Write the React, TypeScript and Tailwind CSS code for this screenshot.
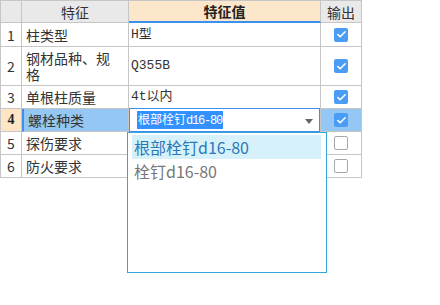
import { Check } from "lucide-react";

type Row = { no: string; name: string; value: string; checked: boolean; h: string };

const rows: Row[] = [
  { no: "1", name: "柱类型", value: "H型", checked: true, h: "h-[24px]" },
  { no: "2", name: "钢材品种、规格", value: "Q355B", checked: true, h: "h-[39px]" },
  { no: "3", name: "单根柱质量", value: "4t以内", checked: true, h: "h-[23px]" },
  { no: "4", name: "螺栓种类", value: "", checked: true, h: "h-[23px]" },
  { no: "5", name: "探伤要求", value: "", checked: false, h: "h-[23px]" },
  { no: "6", name: "防火要求", value: "", checked: false, h: "h-[23px]" },
];

const font = "font-['Noto_Sans_CJK_SC','Noto_Sans',sans-serif]";
const mono = "font-['Liberation_Mono','Noto_Sans_CJK_SC',monospace]";

function CheckBox({ on }: { on: boolean }) {
  if (on) {
    return (
      <div className="w-[14px] h-[14px] rounded-[2px] bg-[#4b9cf5] flex items-center justify-center">
        <Check size={11} strokeWidth={3.5} className="text-white" />
      </div>
    );
  }
  return <div className="w-[14px] h-[14px] rounded-[2px] border border-[#a8a8a8] bg-white" />;
}

export default function App() {
  return (
    <div className={`relative w-[440px] h-[305px] bg-white text-[#333] ${font}`}>
      <div className="w-[362px] border-l border-t border-[#c6c6c6]">
        {/* header */}
        <div className="flex h-[22px] text-[14px] leading-none">
          <div className="w-[21px] bg-[#e9e9e9] border-r border-b border-[#c6c6c6]" />
          <div className="w-[107px] bg-[#e9e9e9] border-r border-b border-[#c6c6c6] flex items-center justify-center">
            特征
          </div>
          <div className="w-[192px] bg-[#fde7cb] border-r border-b-2 border-b-[#3d8ff0] border-r-[#c6c6c6] flex items-center justify-center font-bold text-[#222]">
            特征值
          </div>
          <div className="w-[41px] bg-[#e9e9e9] border-r border-b border-[#c6c6c6] flex items-center justify-center">
            输出
          </div>
        </div>
        {rows.map((r) => {
          const sel = r.no === "4";
          return (
            <div key={r.no} className={`flex ${r.h} text-[14px] leading-[16px]`}>
              <div
                className={`w-[21px] border-r border-b border-[#c6c6c6] flex items-center justify-center ${
                  sel ? "bg-[#fde5c6] font-bold text-[#222] font-['Liberation_Serif',serif]" : ""
                }`}
              >
                {r.no}
              </div>
              <div
                className={`w-[107px] border-r border-b border-[#c6c6c6] flex items-center pl-[4px] pr-[8px] ${
                  sel ? "bg-[#94c7f4] border-l-2 border-l-[#3d8ff0] pl-[3px]" : ""
                }`}
              >
                {r.name}
              </div>
              <div className="w-[192px] border-r border-b border-[#c6c6c6] flex items-center pl-[2px] text-[13px]">
                {sel ? (
                  <div className="relative w-[193px] h-[24px] -ml-[2px] -mt-[1px] border border-[#3d8ff0] bg-white flex items-center pl-[7px]">
                    <span className="bg-[#3390ff] text-white px-[1px] leading-[15px] text-[12px]">
                      根部栓钉<span className={`${mono} tracking-[-1.2px]`}>d16-80</span>
                    </span>
                    <svg className="absolute right-[6px] top-[10px]" width="8" height="5" viewBox="0 0 8 5">
                      <path d="M0 0h8L4 5z" fill="#666" />
                    </svg>
                  </div>
                ) : (
                  <span className={mono}>{r.value}</span>
                )}
              </div>
              <div
                className={`w-[41px] border-r border-b border-[#c6c6c6] flex items-center justify-center ${
                  sel ? "bg-[#94c7f4]" : ""
                }`}
              >
                <CheckBox on={r.checked} />
              </div>
            </div>
          );
        })}
      </div>

      {/* dropdown list */}
      <div className="absolute left-[127px] top-[132px] w-[200px] h-[141px] border border-[#34a7d6] bg-white pt-[2px] px-[4px] text-[16px]">
        <div className="h-[24px] mr-[1px] bg-[#d6f1f9] text-[#2a78b8] flex items-center pl-[2px]">根部栓钉d16-80</div>
        <div className="h-[24px] text-[#777] flex items-center pl-[2px]">栓钉d16-80</div>
      </div>
    </div>
  );
}
